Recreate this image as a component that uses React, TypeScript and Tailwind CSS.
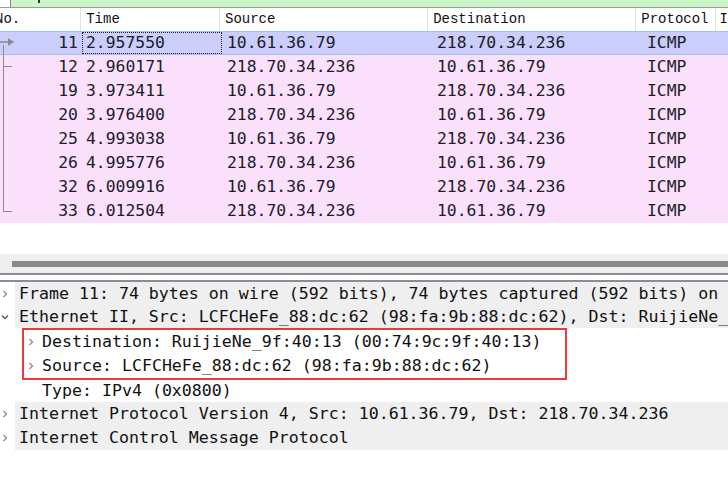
import React from 'react'

const packets = [
  { no: 11, time: '2.957550', src: '10.61.36.79', dst: '218.70.34.236', proto: 'ICMP', selected: true },
  { no: 12, time: '2.960171', src: '218.70.34.236', dst: '10.61.36.79', proto: 'ICMP' },
  { no: 19, time: '3.973411', src: '10.61.36.79', dst: '218.70.34.236', proto: 'ICMP' },
  { no: 20, time: '3.976400', src: '218.70.34.236', dst: '10.61.36.79', proto: 'ICMP' },
  { no: 25, time: '4.993038', src: '10.61.36.79', dst: '218.70.34.236', proto: 'ICMP' },
  { no: 26, time: '4.995776', src: '218.70.34.236', dst: '10.61.36.79', proto: 'ICMP' },
  { no: 32, time: '6.009916', src: '10.61.36.79', dst: '218.70.34.236', proto: 'ICMP' },
  { no: 33, time: '6.012504', src: '218.70.34.236', dst: '10.61.36.79', proto: 'ICMP' },
]

const mono = "font-['DejaVu_Sans_Mono',monospace] text-[16.4px]"
const detailMono = "font-['DejaVu_Sans_Mono',monospace] text-[16.6px] text-[#111]"

function Chevron({ open = false }: { open?: boolean }) {
  return (
    <svg width="10" height="10" viewBox="0 0 10 10" className="shrink-0">
      {open ? (
        <path d="M2 3.5 L5 6.5 L8 3.5" fill="none" stroke="#555" strokeWidth="1.3" />
      ) : (
        <path d="M3.5 2 L6.5 5 L3.5 8" fill="none" stroke="#8a8a8a" strokeWidth="1.3" />
      )}
    </svg>
  )
}

function TreeRow({ text, open, h = 'h-6' }: { text: string; open?: boolean; h?: string }) {
  return (
    <div className={`flex items-center ${h}`}>
      <div className="w-[15px] flex justify-start">
        <Chevron open={open} />
      </div>
      <div className="flex-1 h-full flex items-center whitespace-nowrap overflow-hidden bg-[#efefef] pl-[4px]">
        <span className={detailMono}>{text}</span>
      </div>
    </div>
  )
}

export default function App() {
  return (
    <div className="w-[728px] h-[497px] bg-white overflow-hidden relative">
      {/* display filter bar */}
      <div className="flex h-[8px] border-b border-[#9a9a9a]">
        <div className="w-[11px] bg-white border-r border-[#8a8a8a]" />
        <div className="flex-1 bg-[#ccf5c8] relative">
          <div className="absolute left-[27px] top-0 h-[3px] w-[2px] bg-[#333]" />
        </div>
      </div>

      {/* packet list */}
      <div className="relative">
        <div className="flex h-[23px] items-center font-['Liberation_Mono',monospace] text-[14px] text-[#111]">
          <div className="w-[87px] -ml-[5px] h-full flex items-center border-r border-[#e2e2e2]">No.</div>
          <div className="w-[140px] h-full flex items-center pl-[5px] border-r border-[#e2e2e2]">Time</div>
          <div className="w-[210px] h-full flex items-center pl-[5px] border-r border-[#e2e2e2]">Source</div>
          <div className="w-[210px] h-full flex items-center pl-[5px] border-r border-[#e2e2e2]">Destination</div>
          <div className="w-[80px] h-full flex items-center pl-[5px] border-r border-[#e2e2e2]">Protocol</div>
          <div className="flex-1 h-full flex items-center pl-[4px]">I</div>
        </div>

        <div className="bg-[#fbe0fc]">
          {packets.map((p) => (
            <div
              key={p.no}
              className={`flex items-center h-6 ${mono} text-[#1c1c2a] ${
                p.selected ? 'bg-[#cbcdfb] border-y border-[#9fbff0]' : ''
              }`}
            >
              <div className="w-[82px] text-right pr-[4px]">{p.no}</div>
              <div
                className={`w-[140px] h-full flex items-center pl-[4px] ${
                  p.selected ? 'outline outline-1 outline-dotted outline-[#222] -outline-offset-1' : ''
                }`}
              >
                {p.time}
              </div>
              <div className="w-[210px] pl-[5px]">{p.src}</div>
              <div className="w-[210px] pl-[5px]">{p.dst}</div>
              <div className="w-[80px] pl-[5px]">{p.proto}</div>
            </div>
          ))}
        </div>

        {/* related packet tree lines */}
        <svg className="absolute left-0 top-[23px]" width="20" height="200">
          <path d="M0 11 L8 11" stroke="#8a8a8a" strokeWidth="1.5" />
          <path d="M8 7 L14 11 L8 15 Z" fill="#8a8a8a" />
          <path d="M3.5 14 L3.5 181" stroke="#8a8a8a" strokeWidth="1" />
          <path d="M3.5 35.5 L12 35.5" stroke="#8a8a8a" strokeWidth="1" />
          <path d="M3.5 180.5 L12 180.5" stroke="#8a8a8a" strokeWidth="1" />
        </svg>
      </div>

      <div className="h-[31px]" />

      {/* horizontal scrollbar + splitter */}
      <div className="h-[19px] bg-[#efefef] flex items-center pl-[12px]">
        <div className="h-[6px] flex-1 bg-[#888]" />
      </div>
      <div className="h-[2px] bg-[#8c8c94]" />
      <div className="h-[5px] bg-white" />
      <div className="h-[2px] bg-[#8c8c94]" />

      {/* packet details */}
      <div>
        <TreeRow text="Frame 11: 74 bytes on wire (592 bits), 74 bytes captured (592 bits) on interface" />
        <TreeRow open h="h-[22px]" text="Ethernet II, Src: LCFCHeFe_88:dc:62 (98:fa:9b:88:dc:62), Dst: RuijieNe_9f:40:13 (00:74:9c:9f:40:13)" />
        <div className="ml-[22px] w-[545px] border-2 border-[#ea3a3e]">
          <div className="flex items-center h-6 pl-[2px]">
            <Chevron />
            <span className={`${detailMono} pl-[6px] whitespace-nowrap`}>Destination: RuijieNe_9f:40:13 (00:74:9c:9f:40:13)</span>
          </div>
          <div className="flex items-center h-6 pl-[2px]">
            <Chevron />
            <span className={`${detailMono} pl-[6px] whitespace-nowrap`}>Source: LCFCHeFe_88:dc:62 (98:fa:9b:88:dc:62)</span>
          </div>
        </div>
        <div className="flex items-center h-[22px] pl-[42px]">
          <span className={`${detailMono} whitespace-nowrap`}>Type: IPv4 (0x0800)</span>
        </div>
        <TreeRow text="Internet Protocol Version 4, Src: 10.61.36.79, Dst: 218.70.34.236" />
        <TreeRow text="Internet Control Message Protocol" />
      </div>
    </div>
  )
}
